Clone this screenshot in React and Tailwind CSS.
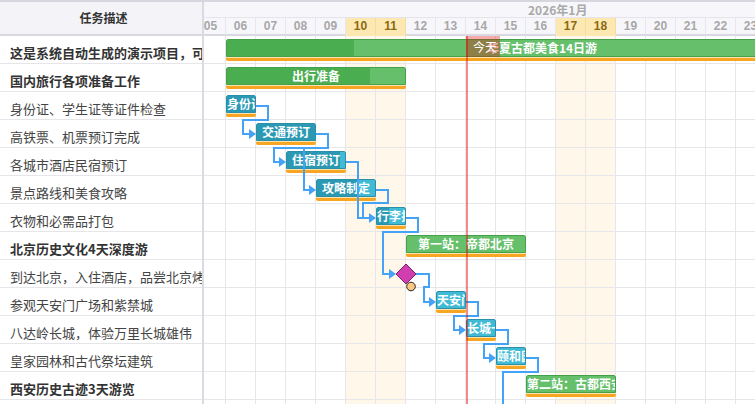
import React from "react";

const days = [5, 6, 7, 8, 9, 10, 11, 12, 13, 14, 15, 16, 17, 18, 19, 20, 21, 22, 23, 24];
const weekend = new Set([10, 11, 17, 18, 24]);

const rows = [
  { name: "这是系统自动生成的演示项目，可以随意修改", bold: true, bar: { left: 30, width: 632, progress: 127, label: "华夏古都美食14日游", color: "green" } },
  { name: "国内旅行各项准备工作", bold: true, bar: { left: 30, width: 180, progress: 143, label: "出行准备", color: "green" } },
  { name: "身份证、学生证等证件检查", bar: { left: 30, width: 30, progress: 30, label: "身份证", color: "teal", align: "left" } },
  { name: "高铁票、机票预订完成", bar: { left: 60, width: 60, progress: 60, label: "交通预订", color: "teal" } },
  { name: "各城市酒店民宿预订", bar: { left: 90, width: 60, progress: 53, label: "住宿预订", color: "teal" } },
  { name: "景点路线和美食攻略", bar: { left: 120, width: 60, progress: 42, label: "攻略制定", color: "teal" } },
  { name: "衣物和必需品打包", bar: { left: 180, width: 30, progress: 12, label: "行李打包", color: "teal", align: "left" } },
  { name: "北京历史文化4天深度游", bold: true, bar: { left: 210, width: 120, progress: 0, label: "第一站：帝都北京", color: "green" } },
  { name: "到达北京，入住酒店，品尝北京烤鸭" },
  { name: "参观天安门广场和紫禁城", bar: { left: 240, width: 30, progress: 0, label: "天安门", color: "teal", align: "left" } },
  { name: "八达岭长城，体验万里长城雄伟", bar: { left: 270, width: 30, progress: 0, label: "长城一日游", color: "teal", align: "left" } },
  { name: "皇家园林和古代祭坛建筑", bar: { left: 300, width: 30, progress: 0, label: "颐和园天坛", color: "teal", align: "left" } },
  { name: "西安历史古迹3天游览", bold: true, bar: { left: 330, width: 90, progress: 0, label: "第二站：古都西安", color: "green", align: "left" } },
  { name: "抵达西安，游览钟鼓楼" },
];

const colors = {
  green: { dark: "bg-[#4aad4f]", light: "bg-[#65bf6b]", border: "border-[#45a04a]" },
  teal: { dark: "bg-[#2b99b4]", light: "bg-[#40bad5]", border: "border-[#2a90a8]" },
};

function Bar({ left, width, progress, label, color, align }) {
  const c = colors[color];
  return (
    <div className="absolute top-[3px] h-[22px] flex flex-col rounded-[2px] overflow-hidden" style={{ left, width }}>
      <div className={`relative h-[18px] border ${c.border} ${c.light} overflow-hidden rounded-t-[2px]`}>
        <div className={`absolute left-0 top-0 bottom-0 ${c.dark}`} style={{ width: progress }} />
        <div
          className={`relative h-full flex items-center whitespace-nowrap text-white font-bold text-[12px] leading-none ${
            align === "left" ? "justify-start" : "justify-center"
          }`}
        >
          {label}
        </div>
      </div>
      <div className="h-[1px] bg-[#ffe2ac]" />
      <div className="h-[3px] bg-[#f6a623]" />
    </div>
  );
}

const paths = [
  [[60, 70], [72, 70], [72, 84], [47, 84], [47, 98], [53, 98]],
  [[120, 98], [132, 98], [132, 112], [78, 112], [78, 126], [83, 126]],
  [[108, 112], [108, 154], [113, 154]],
  [[150, 126], [162, 126], [162, 182], [173, 182]],
  [[180, 154], [192, 154], [192, 167], [167, 167], [167, 182], [173, 182]],
  [[210, 182], [222, 182], [222, 196], [187, 196], [187, 238], [193, 238]],
  [[220, 238], [233, 238], [233, 251], [228, 251], [228, 266], [233, 266]],
  [[270, 266], [282, 266], [282, 280], [258, 280], [258, 294], [263, 294]],
  [[300, 294], [312, 294], [312, 308], [288, 308], [288, 322], [293, 322]],
  [[330, 322], [342, 322], [342, 336], [307, 336], [307, 400]],
];

const arrows = [
  [60, 98],
  [90, 126],
  [120, 154],
  [180, 182],
  [200, 238],
  [240, 266],
  [270, 294],
  [300, 322],
];

export default function App() {
  return (
    <div className="w-[755px] h-[404px] overflow-hidden bg-white flex border-t-2 border-[#d6d6de] font-['Noto_Sans_CJK_SC','Noto_Sans',sans-serif]">
      {/* Left column */}
      <div className="w-[204px] shrink-0 border-r-2 border-[#dadae2] flex flex-col">
        <div className="h-[34px] shrink-0 border-b-2 border-[#d8d8e0] bg-[#f4f4f8] flex items-center justify-center pl-[5px] text-[12px] font-bold text-[#333]">
          任务描述
        </div>
        {rows.map((r, i) => (
          <div
            key={i}
            className={`h-[28px] shrink-0 border-b border-[#e6e6e9] pl-[10px] pt-[8px] whitespace-nowrap overflow-hidden text-[13px] leading-[17px] ${
              r.bold ? "font-bold text-[#333]" : "text-[#444]"
            }`}
          >
            {r.name}
          </div>
        ))}
      </div>

      {/* Timeline */}
      <div className="flex-1 overflow-hidden flex flex-col">
        <div className="h-[16px] shrink-0 bg-[#f7f7fb] border-b border-[#e4e4ea] pl-[324px] text-[12px] font-bold text-[#a9a9a9] leading-[15px] whitespace-nowrap">
          2026年1月
        </div>
        <div className="ml-[-8px] flex shrink-0 h-[18px]">
          {days.map((d) => (
            <div
              key={d}
              className={`w-[30px] shrink-0 h-[18px] border-r border-b-2 flex items-center justify-center text-[12px] font-bold font-['Liberation_Sans',sans-serif] ${
                weekend.has(d)
                  ? "bg-[#fde8b1] border-r-[#f3dca0] border-b-[#fde8b1] text-[#8a6a12]"
                  : "bg-[#f7f7fb] border-r-[#e6e6ec] border-b-[#d8d8e0] text-[#a7a7a7]"
              }`}
            >
              {String(d).padStart(2, "0")}
            </div>
          ))}
        </div>

        <div className="ml-[-8px] relative w-[600px] flex-1">
          {/* column grid */}
          <div className="absolute inset-0 flex">
            {days.map((d) => (
              <div
                key={d}
                className={`w-[30px] shrink-0 h-full border-r border-[#e7e7ea] ${weekend.has(d) ? "bg-[#fff8ea]" : ""}`}
              />
            ))}
          </div>

          {/* rows */}
          <div className="relative flex flex-col">
            {rows.map((r, i) => (
              <div key={i} className="relative h-[28px] shrink-0 border-b border-[#e7e7ea]">
                {r.bar && <Bar {...r.bar} />}
              </div>
            ))}
          </div>

          {/* connectors & milestone */}
          <svg className="absolute left-0 top-0 pointer-events-none" width="600" height="400" viewBox="0 0 600 400">
            {paths.map((p, i) => (
              <polyline
                key={i}
                points={p.map((q) => q.join(",")).join(" ")}
                fill="none"
                stroke="#45a3f7"
                strokeWidth="2"
              />
            ))}
            {arrows.map(([x, y], i) => (
              <polygon key={i} points={`${x},${y} ${x - 7},${y - 5} ${x - 7},${y + 5}`} fill="#45a3f7" />
            ))}
            <polygon points="210,228 220,238 210,248 200,238" fill="#d03fb0" stroke="#7d1f6c" strokeWidth="1" />
            <circle cx="215" cy="250.5" r="4.3" fill="#fcc77f" stroke="#222" strokeWidth="1" />
          </svg>

          {/* today */}
          <div className="absolute left-[270px] top-0 bottom-0 w-[2px] bg-[rgba(226,0,0,0.45)]" />
          <div className="absolute left-[270px] top-0 w-[34px] h-[21px] bg-[rgba(222,0,0,0.33)] pl-[7px] text-white text-[12px] leading-[21px] whitespace-nowrap">
            今天
          </div>
        </div>
      </div>
    </div>
  );
}
